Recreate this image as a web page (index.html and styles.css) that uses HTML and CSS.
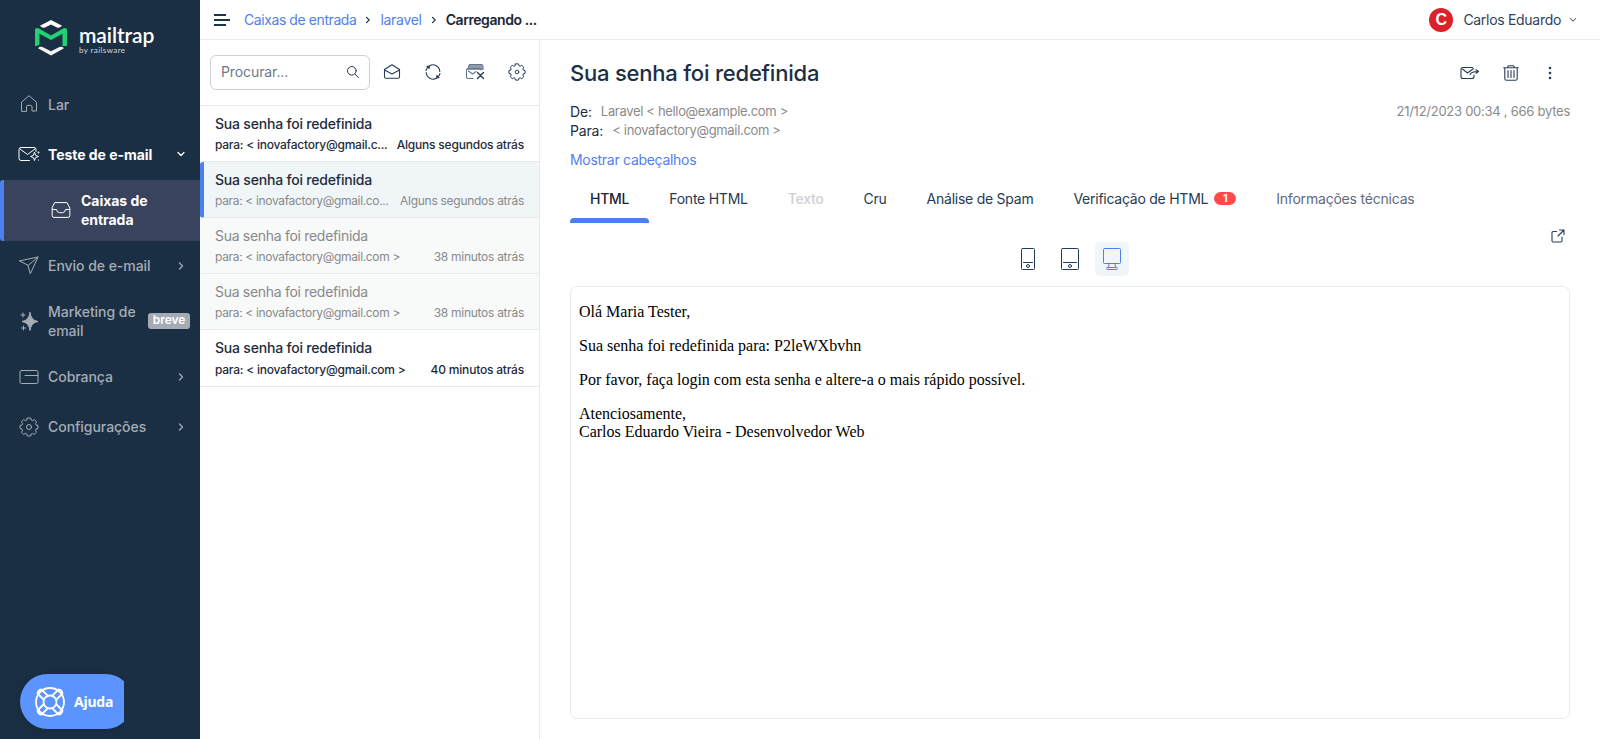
FILE: index.html
```html
<!DOCTYPE html>
<html lang="pt-BR">
<head>
<meta charset="utf-8">
<title>Caixas de entrada</title>
<link rel="stylesheet" href="styles.css">
</head>
<body>
<div class="app">
  <aside class="sidebar">
    <div class="logo">
      <svg class="logo-mark" width="32" height="36" viewBox="0 0 32 36">
        <path d="M16 0 27 5.800Q24.500 8.500 22 7.500L16 4.500 10 7.500Q7 8.500 5 5.800Z" fill="#fff"/>
        <path d="M3 28.200Q5.500 25.500 9 27.800L16 31.200 23 27.800Q26.500 25.500 29 28.200L16 35.500Z" fill="#f2f2f3"/>
        <path d="M0 9.500Q.5 7.500 3 8L16 15.500 29 8Q31.500 7.500 32 9.500V26H27.500V13.800L16 20 4.500 13.800V23.500Q4 26 0 26Z" fill="#22d172"/>
      </svg>
      <div class="logo-text"><span class="logo-name">mailtrap</span><span class="logo-by">by railsware</span></div>
    </div>
    <nav class="nav">
      <a class="nav-item">
        <svg class="nav-icon" width="20" height="20" viewBox="0 0 20 20"><path d="M2.500 17V8.200L10 1.700 17.500 8.200V17H13V12.800Q13 11.300 11.500 11.300H9Q7.500 11.300 7.500 12.800V17Z"/></svg>
        <span>Lar</span>
      </a>
      <a class="nav-item open">
        <svg class="nav-icon wide" width="23" height="20" viewBox="0 0 23 20"><path d="M11.500 16.500H3Q1 16.500 1 14.500V5.500Q1 3.500 3 3.500H16Q18 3.500 18 5.500V7.500M2 5 9.500 10.500 17 5"/><path d="M16.500 8.500Q16.700 12.300 20.500 12.500 16.700 12.700 16.500 16.500 16.300 12.700 12.500 12.500 16.300 12.300 16.500 8.500Z"/><circle cx="20.500" cy="8.500" r=".9" fill="currentColor" stroke="none"/><circle cx="20.500" cy="16" r=".6" fill="currentColor" stroke="none"/></svg>
        <span>Teste de e-mail</span>
        <svg class="chev" width="8" height="8" viewBox="0 0 8 8"><path d="M1 2.500 4 5.500 7 2.500"/></svg>
      </a>
      <a class="nav-item sub">
        <svg class="nav-icon" width="20" height="20" viewBox="0 0 20 20"><path d="M4 2.600H16L18.800 8V15.500Q18.800 17.400 17 17.400H3Q1.200 17.400 1.200 15.500V8ZM1.200 9.500H5.500Q6 12.700 8.500 12.700H11.500Q14 12.700 14.500 9.500H18.800"/></svg>
        <span>Caixas de entrada</span>
      </a>
      <a class="nav-item">
        <svg class="nav-icon" width="20" height="20" viewBox="0 0 20 20"><path d="M.8 4.800 19 1 11.300 17.800 9 9.600ZM9 9.600 19 1"/></svg>
        <span>Envio de e-mail</span>
        <svg class="chev" width="8" height="8" viewBox="0 0 8 8"><path d="M2.500 1 5.500 4 2.500 7"/></svg>
      </a>
      <a class="nav-item tall">
        <svg class="nav-icon" width="20" height="20" viewBox="0 0 20 20"><path d="M11 1.500Q12 9.500 19 10.500 12 11.500 11 19.500 10 11.500 3 10.500 10 9.500 11 1.500Z" fill="currentColor"/><path d="M4 2V6M2 4H6M4.500 15V19M2.500 17H6.500"/></svg>
        <span>Marketing de email</span>
        <b class="soon">breve</b>
      </a>
      <a class="nav-item">
        <svg class="nav-icon" width="20" height="20" viewBox="0 0 20 20"><rect x="1" y="3.500" width="18" height="13" rx="1.500"/><path d="M6 8.500H19"/></svg>
        <span>Cobrança</span>
        <svg class="chev" width="8" height="8" viewBox="0 0 8 8"><path d="M2.500 1 5.500 4 2.500 7"/></svg>
      </a>
      <a class="nav-item">
        <svg class="nav-icon" width="20" height="20" viewBox="0 0 20 20"><path d="M8.300 1H11.700L12.300 3.100 13.500 3.600 15.300 2.600 17.500 4.700 16.500 6.600 17 7.900 19 8.500V11.500L17 12.100 16.500 13.400 17.500 15.300 15.300 17.400 13.500 16.400 12.300 16.900 11.700 19H8.300L7.700 16.900 6.500 16.400 4.700 17.400 2.500 15.300 3.500 13.400 3 12.100 1 11.500V8.500L3 7.900 3.500 6.600 2.500 4.700 4.700 2.600 6.500 3.600 7.700 3.100Z"/><circle cx="10" cy="10" r="2.500"/></svg>
        <span>Configurações</span>
        <svg class="chev" width="8" height="8" viewBox="0 0 8 8"><path d="M2.500 1 5.500 4 2.500 7"/></svg>
      </a>
    </nav>
    <div class="help">
      <button class="help-btn">
        <svg width="30" height="30" viewBox="0 0 30 30"><circle cx="15" cy="15" r="14"/><circle cx="15" cy="15" r="6.500"/><path d="M8.500 12.500 2.500 6.500Q3 3 6.500 2.500L12.500 8.500M17.500 8.500 23.500 2.500Q27 3 27.500 6.500L21.500 12.500M21.500 17.500 27.500 23.500Q27 27 23.500 27.500L17.500 21.500M12.500 21.500 6.500 27.500Q3 27 2.500 23.500L8.500 17.500"/></svg>
        <span>Ajuda</span>
      </button>
    </div>
  </aside>

  <div class="page">
    <header class="topbar">
      <div class="burger"><i></i><i></i><i></i></div>
      <div class="crumbs">
        <a>Caixas de entrada</a>
        <svg class="sep" width="8" height="8" viewBox="0 0 8 8"><path d="M2.500 1.300 5.200 4 2.500 6.700"/></svg>
        <a class="inbox">laravel</a>
        <svg class="sep" width="8" height="8" viewBox="0 0 8 8"><path d="M2.500 1.300 5.200 4 2.500 6.700"/></svg>
        <b>Carregando ...</b>
      </div>
      <div class="user">
        <span class="avatar">C</span>
        <span>Carlos Eduardo</span>
        <svg width="8" height="8" viewBox="0 0 8 8"><path d="M1.200 2.500 4 5.200 6.800 2.500"/></svg>
      </div>
    </header>

    <div class="body">
      <section class="list">
        <div class="tools">
          <div class="search">
            <span>Procurar...</span>
            <svg width="14" height="14" viewBox="0 0 14 14"><circle cx="5.800" cy="5.800" r="4.300"/><path d="M9 9 12.500 12.500"/></svg>
          </div>
          <div class="tool-icons">
            <svg class="ico" width="18" height="18" viewBox="0 0 18 18"><path d="M1.500 6.500 9 1.700 16.500 6.500V13.700Q16.500 15.200 15 15.200H3Q1.500 15.200 1.500 13.700ZM1.500 7 9 11 16.500 7"/></svg>
            <svg class="ico" width="18" height="18" viewBox="0 0 18 18"><path d="M5.500 2.700A7 7 0 0 1 15.800 8.500M12.500 15.300A7 7 0 0 1 2.200 9.500M2 7.500A7 7 0 0 1 3.800 4.300M16 10.500A7 7 0 0 1 14.200 13.700"/><path d="M2 3 6 2.500 5.500 6.500ZM16 15 12 15.500 12.500 11.500Z" fill="currentColor" stroke="none"/></svg>
            <svg class="ico" width="20" height="18" viewBox="0 0 20 18"><path d="M4.500 1.500H17L18 4.500V7H1.500L2.500 5Z" fill="#8e9bab" stroke="none"/><path d="M3.500 4 4.500 1.500H16.500Q18 1.500 18 3.500V6.500M8 15.500H3Q1.500 15.500 1.500 14V7L2.500 5.500H14.500Q16 5.500 16 7M3.500 8 7.500 11 11 8.500" stroke="#65768a"/><path d="M12.500 9.500 18.500 15.500M18.500 9.500 12.500 15.500" stroke-width="1.400"/></svg>
            <svg class="ico" width="18" height="18" viewBox="0 0 20 20"><path d="M8.300 1H11.700L12.300 3.100 13.500 3.600 15.300 2.600 17.500 4.700 16.500 6.600 17 7.900 19 8.500V11.500L17 12.100 16.500 13.400 17.500 15.300 15.300 17.400 13.500 16.400 12.300 16.900 11.700 19H8.300L7.700 16.900 6.500 16.400 4.700 17.400 2.500 15.300 3.500 13.400 3 12.100 1 11.500V8.500L3 7.900 3.500 6.600 2.500 4.700 4.700 2.600 6.500 3.600 7.700 3.100Z"/><circle cx="10" cy="10" r="2"/></svg>
          </div>
        </div>
        <article class="mail unread"><h3>Sua senha foi redefinida</h3><p><span class="to">para: &lt; inovafactory@gmail.c...</span><time>Alguns segundos atrás</time></p></article>
        <article class="mail selected"><h3>Sua senha foi redefinida</h3><p><span class="to">para: &lt; inovafactory@gmail.co...</span><time>Alguns segundos atrás</time></p></article>
        <article class="mail"><h3>Sua senha foi redefinida</h3><p><span class="to">para: &lt; inovafactory@gmail.com &gt;</span><time>38 minutos atrás</time></p></article>
        <article class="mail"><h3>Sua senha foi redefinida</h3><p><span class="to">para: &lt; inovafactory@gmail.com &gt;</span><time>38 minutos atrás</time></p></article>
        <article class="mail unread last"><h3>Sua senha foi redefinida</h3><p><span class="to">para: &lt; inovafactory@gmail.com &gt;</span><time>40 minutos atrás</time></p></article>
      </section>

      <main class="message">
        <div class="head">
          <h1>Sua senha foi redefinida</h1>
          <div class="actions">
            <svg class="ico" width="20" height="16" viewBox="0 0 20 16"><path d="M14 10V11.500Q14 13.500 12 13.500H3Q1 13.500 1 11.500V4.500Q1 2.500 3 2.500H12.500M2.500 4 7.500 8 13.500 3.500M10 9.500Q11.500 6.500 18 6.500M16 4.700 18.500 6.500 16 8.300"/></svg>
            <svg class="ico" width="16" height="16" viewBox="0 0 16 16"><path d="M.7 2.800H15.300M4.500 2.500 5.500.7H10.500L11.500 2.500M1.800 3V13.500Q1.800 15.300 3.600 15.300H12.400Q14.200 15.300 14.200 13.500V3M5 5.500V12.500M8 5.500V12.500M11 5.500V12.500"/></svg>
            <svg class="ico dots" width="16" height="16" viewBox="0 0 16 16"><circle cx="8" cy="3" r="1.300"/><circle cx="8" cy="8" r="1.300"/><circle cx="8" cy="13" r="1.300"/></svg>
          </div>
        </div>
        <div class="meta">
          <dl>
            <div><dt>De:</dt><dd>Laravel &lt; hello@example.com &gt;</dd></div>
            <div><dt>Para:</dt><dd class="rcpt">&lt; inovafactory@gmail.com &gt;</dd></div>
          </dl>
          <span class="date">21/12/2023 00:34 , 666 bytes</span>
        </div>
        <a class="headers">Mostrar cabeçalhos</a>
        <div class="tabs">
          <a class="tab active">HTML</a>
          <a class="tab">Fonte HTML</a>
          <a class="tab off">Texto</a>
          <a class="tab">Cru</a>
          <a class="tab">Análise de Spam</a>
          <a class="tab">Verificação de HTML<b class="count">1</b></a>
          <a class="tab soft">Informações técnicas</a>
        </div>
        <div class="viewbar">
          <div class="devices">
            <span class="dev"><svg width="24" height="24" viewBox="0 0 24 24"><rect x="5.500" y="1.500" width="13" height="21" rx="1"/><path d="M7.500 15.500H16.500"/><circle cx="12" cy="19" r="1.500"/></svg></span>
            <span class="dev"><svg width="24" height="24" viewBox="0 0 24 24"><rect x="3.500" y="1.500" width="17" height="21" rx="1"/><path d="M5.500 15.500H18.500"/><circle cx="12" cy="19" r="1.500"/></svg></span>
            <span class="dev on"><svg width="24" height="24" viewBox="0 0 24 24"><rect x="3.500" y="1.500" width="17" height="15" rx="1"/><path d="M9 16.500 8.500 20.500M15 16.500 15.500 20.500"/><rect x="6.500" y="20.500" width="11" height="2" rx="1"/></svg></span>
          </div>
          <svg class="ico popout" width="14" height="14" viewBox="0 0 14 14"><path d="M5.500 2.500H2.200Q1 2.500 1 3.700V11.800Q1 13 2.200 13H9.800Q11 13 11 11.800V8M8.500 1H13V5.500M13 1 7 7"/></svg>
        </div>
        <div class="frame">
          <p>Olá Maria Tester,</p>
          <p>Sua senha foi redefinida para: P2leWXbvhn</p>
          <p>Por favor, faça login com esta senha e altere-a o mais rápido possível.</p>
          <p>Atenciosamente,<br>Carlos Eduardo Vieira - Desenvolvedor Web</p>
        </div>
      </main>
    </div>
  </div>
</div>
</body>
</html>
```
FILE: styles.css
```css
* { box-sizing: border-box; }
body { margin: 0; font: 14px/18px Inter, "Liberation Sans", sans-serif; color: #1c2e44; background: #fff; }
h1, h3, p, dl, dd { margin: 0; }
svg { fill: none; stroke: currentColor; stroke-linecap: round; stroke-linejoin: round; flex: none; }
.app { display: flex; height: 739px; overflow: hidden; }

/* Sidebar */
.sidebar { width: 200px; flex: none; display: flex; flex-direction: column; background: #1b2f44; color: #a4acb4; }
.logo { height: 79px; padding: 20px 0 0 35px; display: flex; gap: 12px; }
.logo-mark { stroke: none; }
.logo-text { display: flex; flex-direction: column; color: #fff; padding-top: 3px; }
.logo-name { font: 600 21px/23px Lato, sans-serif; letter-spacing: -.1px; }
.logo-by { font: 400 8px/8px Lato, sans-serif; color: #d2d5da; letter-spacing: .4px; }
.nav-item { display: flex; align-items: center; height: 50px; padding: 0 15px 0 19px; font-weight: 500; line-height: 19px; letter-spacing: -.04px; }
.nav-item span { margin-left: 9px; white-space: nowrap; }
.nav-icon { stroke-width: 1; }
.nav-icon.wide { margin-left: -1px; margin-right: -2px; }
.chev { margin-left: auto; stroke-width: 1.300; }
.nav-item.open { height: 51px; padding-bottom: 1px; color: #fff; font-weight: 700; }
.nav-item.sub { height: 61px; padding: 0 0 1px 47px; border-left: 4px solid #4a80ef; border-radius: 3px 0 0 3px; background: #3a435e; color: #fff; font-weight: 700; }
.nav-item.sub span { margin-left: 10px; white-space: normal; width: 80px; }
.nav-item.sub ~ .nav-item { padding-bottom: 1px; }
.nav-item.tall { height: 61px; padding-right: 10px; }
.nav-item.tall span { white-space: normal; width: 95px; }
.soon { margin-left: auto; width: 42px; height: 16px; border-radius: 3px; background: #a3abb4; color: #fff; font-size: 12px; line-height: 14px; font-weight: 600; text-align: center; letter-spacing: -.1px; }
.help { margin: auto 0 0 0; padding: 10px 0 10px 20px; width: 124px; overflow: hidden; }
.help-btn { width: 113px; height: 55px; border: 0; border-radius: 28px; padding: 0 0 0 15px; display: flex; align-items: center; gap: 9px; background: #5c94ff; color: #fff; font: 700 14px "Noto Sans", sans-serif; letter-spacing: -.2px; box-shadow: 0 0 10px rgba(0, 0, 0, .18); }
.help-btn svg { stroke-width: 1.800; }

/* Top bar */
.page { flex: 1; min-width: 0; display: flex; flex-direction: column; }
.topbar { height: 40px; display: flex; align-items: center; padding: 0 23px 0 14px; border-bottom: 1px solid #ebebed; }
.burger { width: 16px; display: flex; flex-direction: column; gap: 3px; }
.burger i { height: 2px; width: 12px; background: #1c3550; }
.burger i:nth-child(2) { width: 16px; }
.crumbs { display: flex; align-items: center; margin-left: 14px; letter-spacing: -.42px; }
.crumbs a, .headers { color: #5480ea; }
.crumbs .inbox { letter-spacing: -.3px; }
.crumbs b { font-weight: 600; color: #1b2638; letter-spacing: -.43px; }
.sep { margin: 0 8px; stroke-width: 1.200; }
.user { margin-left: auto; display: flex; align-items: center; gap: 10px; color: #2f4358; letter-spacing: -.3px; }
.user svg { margin-left: -2px; }
.avatar { width: 24px; height: 24px; border-radius: 50%; background: #dc2128; color: #fff; font: 700 16px/24px "Liberation Sans", sans-serif; text-align: center; letter-spacing: 0; }

/* Message list */
.body { flex: 1; display: flex; min-height: 0; }
.list { width: 340px; flex: none; border-right: 1px solid #ebebed; }
.tools { height: 66px; padding: 0 13px 0 10px; display: flex; align-items: center; border-bottom: 1px solid #e8e8ea; justify-content: space-between; }
.search { width: 160px; height: 35px; border: 1px solid #cfd1d5; border-radius: 6px; display: flex; align-items: center; justify-content: space-between; padding: 0 9px 2px 10px; color: #6f7a88; letter-spacing: -.1px; }
.search svg { stroke: #24384e; }
.tool-icons { width: 143px; display: flex; align-items: center; justify-content: space-between; padding-bottom: 2px; }
.ico { color: #263d55; stroke-width: 1.100; }
.mail { height: 56px; padding: 8px 15px 0; border-bottom: 1px solid #e8eaeb; background: #f8faf9; color: #88898b; }
.mail h3 { font-size: 14px; line-height: 20px; font-weight: 400; letter-spacing: -.3px; }
.mail p { display: flex; justify-content: space-between; font-size: 12px; line-height: 18px; padding-top: 2px; white-space: nowrap; letter-spacing: -.33px; }
.mail time { letter-spacing: -.28px; }
.unread { background: #fff; color: #1f2c3c; }
.unread h3, .unread p, .selected h3 { font-weight: 500; letter-spacing: -.2px; }
.unread p { letter-spacing: -.24px; }
.unread time { letter-spacing: -.2px; }
.selected { background: #f0f6f7; border-left: 4px solid #4a80ef; border-radius: 3px 0 0 3px; padding-left: 11px; }
.selected h3 { color: #1f2c3c; }
.last { height: 57px; }
.last p { padding-top: 3px; }

/* Message */
.message { flex: 1; min-width: 0; padding: 0 30px 20px; display: flex; flex-direction: column; }
.head { display: flex; align-items: center; justify-content: space-between; height: 66px; }
h1 { font-size: 22px; line-height: 28px; font-weight: 500; letter-spacing: -.21px; }
.actions { display: flex; align-items: center; gap: 23px; padding-right: 12px; }
.dots { fill: currentColor; stroke: none; }
.meta { display: flex; justify-content: space-between; height: 44px; font-size: 13px; line-height: 19px; margin-top: -4px; color: #8a8a8c; letter-spacing: -.33px; }
.meta div { display: flex; gap: 9px; }
.meta dt { color: #1f2c3c; font-size: 14px; letter-spacing: -.15px; }
.meta .date { letter-spacing: -.26px; }
.headers { line-height: 18px; margin-top: 5px; align-self: flex-start; letter-spacing: -.29px; }
.tabs { display: flex; margin-top: 11px; height: 43px; }
.tab { padding: 10px 20px 0; height: 43px; white-space: nowrap; display: flex; color: #263b52; letter-spacing: -.25px; }
.tab.active { font-weight: 500; color: #1b2638; position: relative; }
.tab.active::after { content: ""; position: absolute; left: 0; right: 0; bottom: 0; height: 5px; border-radius: 4px 4px 0 0; background: #4a80ef; }
.tab.off { color: #cdd0d4; font-weight: 500; }
.tab.soft { color: #626a80; letter-spacing: -.2px; }
.count { width: 22px; height: 13px; margin: 2px 0 0 6px; border-radius: 7px; background: #ff4b4b; color: #fff; font-size: 10px; line-height: 13px; font-weight: 700; text-align: center; }
.viewbar { display: grid; grid-template-columns: 1fr auto 1fr; padding-top: 6px; height: 63px; }
.devices { grid-column: 2; display: flex; gap: 8px; padding-top: 13px; }
.dev { width: 34px; height: 34px; border-radius: 5px; display: grid; place-items: center; color: #213a58; }
.dev.on { background: #f0f6f7; color: #4a80ef; }
.popout { justify-self: end; margin-right: 5px; }
.frame { flex: 1; border: 1px solid #ebebed; border-radius: 7px; padding: 0 8px; font: 16px/18px "Liberation Serif", serif; color: #000; }
.frame p { margin: 16px 0; }
```
